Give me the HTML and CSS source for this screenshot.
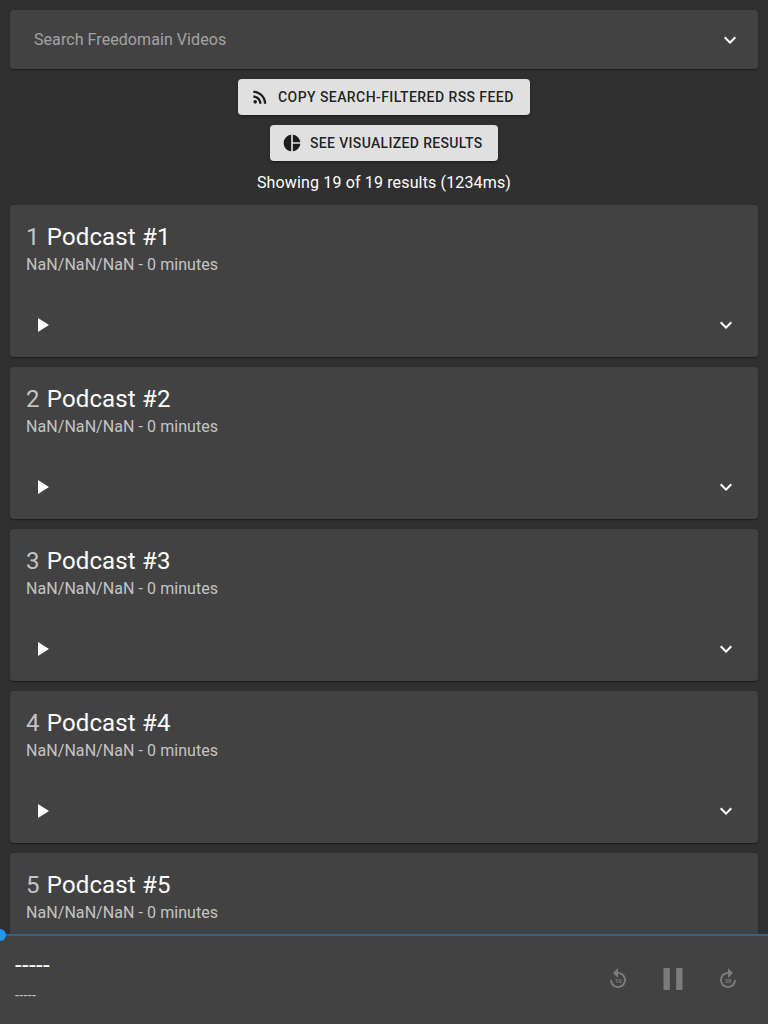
FILE: index.html
```html
<!DOCTYPE html>
<html lang="en">
<head>
<meta charset="utf-8">
<title>Freedomain Videos</title>
<link rel="stylesheet" href="styles.css">
</head>
<body>
<svg class="sprite" aria-hidden="true">
  <symbol id="chevron" viewBox="0 0 24 24"><path d="M7.41 8.59 12 13.17l4.59-4.58L18 10l-6 6-6-6 1.41-1.41z"/></symbol>
  <symbol id="play" viewBox="0 0 24 24"><path d="M8 5v14l11-7z"/></symbol>
</svg>
<main class="page">
  <div class="search paper">
    <input class="search-input" type="text" placeholder="Search Freedomain Videos">
    <svg class="icon"><use href="#chevron"/></svg>
  </div>
  <button class="button button-copy">
    <svg class="button-icon" viewBox="0 0 24 24"><circle cx="6.18" cy="17.82" r="2.18"/><path d="M4 4.44v2.83c7.03 0 12.73 5.7 12.73 12.73h2.83c0-8.59-6.97-15.56-15.56-15.56zm0 5.66v2.83c3.9 0 7.07 3.17 7.07 7.07h2.83c0-5.47-4.43-9.9-9.9-9.9z"/></svg>
    Copy search-filtered RSS feed
  </button>
  <button class="button button-visualize">
    <svg class="button-icon" viewBox="0 0 24 24"><path d="M11 2v20c-5.070-.5-9-4.790-9-10s3.930-9.500 9-10zm2.030 0v8.990H22c-.47-4.740-4.240-8.520-8.970-8.990zm0 11.010V22c4.740-.47 8.500-4.250 8.970-8.990h-8.970z"/></svg>
    See visualized results
  </button>
  <p class="status">Showing 19 of 19 results (1234ms)</p>
  <section class="results">
    <article class="card paper">
      <h2 class="card-title"><span class="number">1</span> Podcast #1</h2>
      <p class="card-meta">NaN/NaN/NaN - 0 minutes</p>
      <div class="card-actions"><svg class="icon"><use href="#play"/></svg><svg class="icon"><use href="#chevron"/></svg></div>
    </article>
    <article class="card paper">
      <h2 class="card-title"><span class="number">2</span> Podcast #2</h2>
      <p class="card-meta">NaN/NaN/NaN - 0 minutes</p>
      <div class="card-actions"><svg class="icon"><use href="#play"/></svg><svg class="icon"><use href="#chevron"/></svg></div>
    </article>
    <article class="card paper">
      <h2 class="card-title"><span class="number">3</span> Podcast #3</h2>
      <p class="card-meta">NaN/NaN/NaN - 0 minutes</p>
      <div class="card-actions"><svg class="icon"><use href="#play"/></svg><svg class="icon"><use href="#chevron"/></svg></div>
    </article>
    <article class="card paper">
      <h2 class="card-title"><span class="number">4</span> Podcast #4</h2>
      <p class="card-meta">NaN/NaN/NaN - 0 minutes</p>
      <div class="card-actions"><svg class="icon"><use href="#play"/></svg><svg class="icon"><use href="#chevron"/></svg></div>
    </article>
    <article class="card paper">
      <h2 class="card-title"><span class="number">5</span> Podcast #5</h2>
      <p class="card-meta">NaN/NaN/NaN - 0 minutes</p>
      <div class="card-actions"><svg class="icon"><use href="#play"/></svg><svg class="icon"><use href="#chevron"/></svg></div>
    </article>
  </section>
</main>
<footer class="player">
  <div class="slider"><span class="thumb"></span></div>
  <div class="track">
    <div class="track-title">-----</div>
    <div class="track-time">-----</div>
  </div>
  <div class="controls">
    <svg class="icon" viewBox="0 0 24 24"><path d="M12 5V1L7 6l5 5V7c3.300 0 6 2.700 6 6s-2.700 6-6 6-6-2.700-6-6H4c0 4.400 3.600 8 8 8s8-3.600 8-8-3.600-8-8-8z"/><text class="seconds" x="12.200" y="16">10</text></svg>
    <svg class="icon pause" viewBox="0 0 24 24"><path d="M6 19h4V5H6v14zm8-14v14h4V5h-4z"/></svg>
    <svg class="icon" viewBox="0 0 24 24"><path d="M12 5V1l5 5-5 5V7c-3.300 0-6 2.700-6 6s2.700 6 6 6 6-2.700 6-6h2c0 4.400-3.600 8-8 8s-8-3.600-8-8 3.600-8 8-8z"/><text class="seconds" x="12" y="16">30</text></svg>
  </div>
</footer>
</body>
</html>
```

FILE: styles.css
```css
* { box-sizing: border-box; }

body {
  margin: 0;
  height: 100vh;
  overflow: hidden;
  background: #303030;
  color: #fff;
  font: 400 16px/1.5 Roboto, sans-serif;
  letter-spacing: 0.00938em;
}

.sprite { display: none; }

.page {
  display: flex;
  flex-direction: column;
  align-items: center;
  gap: 10px;
  padding: 10px;
}

.paper {
  width: 100%;
  background: #424242;
  border-radius: 4px;
  box-shadow: 0 2px 1px -1px rgba(0,0,0,.2), 0 1px 1px rgba(0,0,0,.14), 0 1px 3px rgba(0,0,0,.12);
}

.icon {
  display: block;
  flex: none;
  width: 24px;
  height: 24px;
  fill: currentColor;
}

.search {
  display: flex;
  align-items: center;
  height: 59px;
  padding: 0 16px 0 24px;
}

.search-input {
  flex: 1;
  min-width: 0;
  padding: 0;
  border: 0;
  outline: 0;
  background: transparent;
  color: #fff;
  font: inherit;
  letter-spacing: 0.07px;
}

.search-input::placeholder { color: #fff; opacity: .5; }

.button {
  display: flex;
  align-items: center;
  gap: 8px;
  height: 36px;
  padding: 6px 16px 6px 12px;
  border: 0;
  border-radius: 4px;
  background: #e0e0e0;
  color: rgba(0,0,0,.87);
  font: 500 14px/1.75 Roboto, sans-serif;
  letter-spacing: 0.4px;
  white-space: nowrap;
  text-transform: uppercase;
  box-shadow: 0 3px 1px -2px rgba(0,0,0,.2), 0 2px 2px rgba(0,0,0,.14), 0 1px 5px rgba(0,0,0,.12);
}

.button-copy { width: 292px; letter-spacing: 0.43px; }
.button-visualize { width: 228px; letter-spacing: 0.34px; }

.button-icon { flex: none; width: 20px; height: 20px; fill: currentColor; }

.status { margin: 0; }

.results {
  display: flex;
  flex-direction: column;
  gap: 10px;
  width: 100%;
}

.card { height: 152px; padding-top: 16px; }

.card-title {
  margin: 0;
  padding: 0 16px;
  font-size: 24px;
  font-weight: 400;
  line-height: 32px;
  letter-spacing: 0.15px;
}

.number, .card-meta { color: rgba(255,255,255,.7); }

.number { margin-right: 1px; }

.card-meta { margin: 0; padding: 0 16px; letter-spacing: 0.065px; }

.card-actions {
  display: flex;
  justify-content: space-between;
  padding: 36px 20px 0;
}

.player {
  position: fixed;
  inset: auto 0 0;
  display: flex;
  align-items: center;
  justify-content: space-between;
  height: 89px;
  padding: 0 28px 1px 15px;
  background: #424242;
}

.slider {
  position: absolute;
  inset: -1px 0 auto;
  height: 2px;
  background: #356289;
}

.thumb {
  position: absolute;
  top: -5px;
  left: -6px;
  width: 12px;
  height: 12px;
  border-radius: 50%;
  background: #2196f3;
}

.track { display: flex; flex-direction: column; gap: 2px; margin-bottom: 2px; }

.track-title { font-size: 24px; line-height: 32px; letter-spacing: 0.38px; }

.track-time { font-size: 14px; line-height: 24px; letter-spacing: 0.35px; color: rgba(255,255,255,.7); }

.controls {
  display: flex;
  align-items: center;
  gap: 24px;
  color: rgba(255,255,255,.3);
}

.pause { width: 38px; height: 38px; }

.seconds {
  font: 700 6px Roboto, sans-serif;
  letter-spacing: 0;
  text-anchor: middle;
}
```
